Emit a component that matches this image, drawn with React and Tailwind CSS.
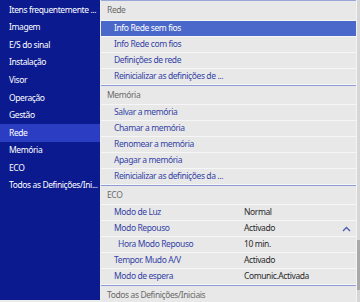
const leftItems = [
  'Itens frequentemente ...',
  'Imagem',
  'E/S do sinal',
  'Instalação',
  'Visor',
  'Operação',
  'Gestão',
  'Rede',
  'Memória',
  'ECO',
  'Todos as Definições/Ini...',
];

const sections = [
  {
    title: 'Rede',
    rows: [
      { label: 'Info Rede sem fios', active: true },
      { label: 'Info Rede com fios' },
      { label: 'Definições de rede' },
      { label: 'Reinicializar as definições de ...' },
    ],
  },
  {
    title: 'Memória',
    rows: [
      { label: 'Salvar a memória' },
      { label: 'Chamar a memória' },
      { label: 'Renomear a memória' },
      { label: 'Apagar a memória' },
      { label: 'Reinicializar as definições da ...' },
    ],
  },
  {
    title: 'ECO',
    rows: [
      { label: 'Modo de Luz', value: 'Normal' },
      { label: 'Modo Repouso', value: 'Activado', open: true },
      { label: 'Hora Modo Repouso', value: '10 min.', sub: true },
      { label: 'Tempor. Mudo A/V', value: 'Activado' },
      { label: 'Modo de espera', value: 'Comunic.Activada' },
    ],
  },
  { title: 'Todos as Definições/Iniciais', rows: [] },
];

const ChevronUp = () => (
  <svg width="9" height="6" viewBox="0 0 9 6" fill="none">
    <path d="M1 5 L4.5 1.5 L8 5" stroke="#4b5bb0" strokeWidth="1.3" />
  </svg>
);

const Row = ({ row }) => (
  <div
    className={`flex items-center h-[16px] border-b border-[#f6f6f6] whitespace-nowrap ${
      row.active ? 'bg-[#4a68c9] text-white' : 'text-[#3343a6]'
    }`}
  >
    <span
      className={`${row.sub ? 'pl-[17px]' : 'pl-[13px]'} ${
        row.value ? 'w-[143px] shrink-0' : 'flex-1'
      }`}
    >
      {row.label}
    </span>
    {row.value && <span className="text-[#2a2a2a] flex-1">{row.value}</span>}
    {row.open && (
      <span className="pr-[5px] flex items-center">
        <ChevronUp />
      </span>
    )}
  </div>
);

export default function App() {
  return (
    <div
      className="w-[360px] h-[302px] flex bg-[#ececec] overflow-hidden text-[8.5px] leading-none tracking-[-0.4px]"
      style={{ fontFamily: '"Noto Sans", "Open Sans", sans-serif' }}
    >
      {/* left menu */}
      <div className="w-[100px] h-[300px] bg-[#0b1a8e] pt-[1px] shrink-0 overflow-hidden">
        {leftItems.map((item) => (
          <div
            key={item}
            className={`h-[17.6px] flex items-center pl-[9px] text-white whitespace-nowrap ${
              item === 'Rede' ? 'bg-[#2b3ec3]' : ''
            }`}
          >
            {item}
          </div>
        ))}
      </div>

      {/* right panel */}
      <div className="flex-1 ml-[1px] bg-[#e8e8e8] border-t border-[#9aa5d8]">
        {sections.map((s, i) => (
          <div key={s.title} className={i > 0 ? 'border-t border-[#8e9bd6]' : ''}>
            <div
              className={`${i === 0 ? 'h-[20px]' : 'h-[19px]'} flex items-center pl-[6px] text-[#6a6a6a] border-b border-[#f6f6f6] whitespace-nowrap`}
            >
              {s.title}
            </div>
            {s.rows.map((r) => (
              <Row key={r.label} row={r} />
            ))}
          </div>
        ))}
      </div>

      {/* scrollbar */}
      <div className="w-[4px] bg-[#d6d6d6] flex flex-col border-l border-[#f4f4f4]">
        <div className="h-[240px]" />
        <div className="h-[50px] bg-[#a9a9a9]" />
      </div>
    </div>
  );
}
